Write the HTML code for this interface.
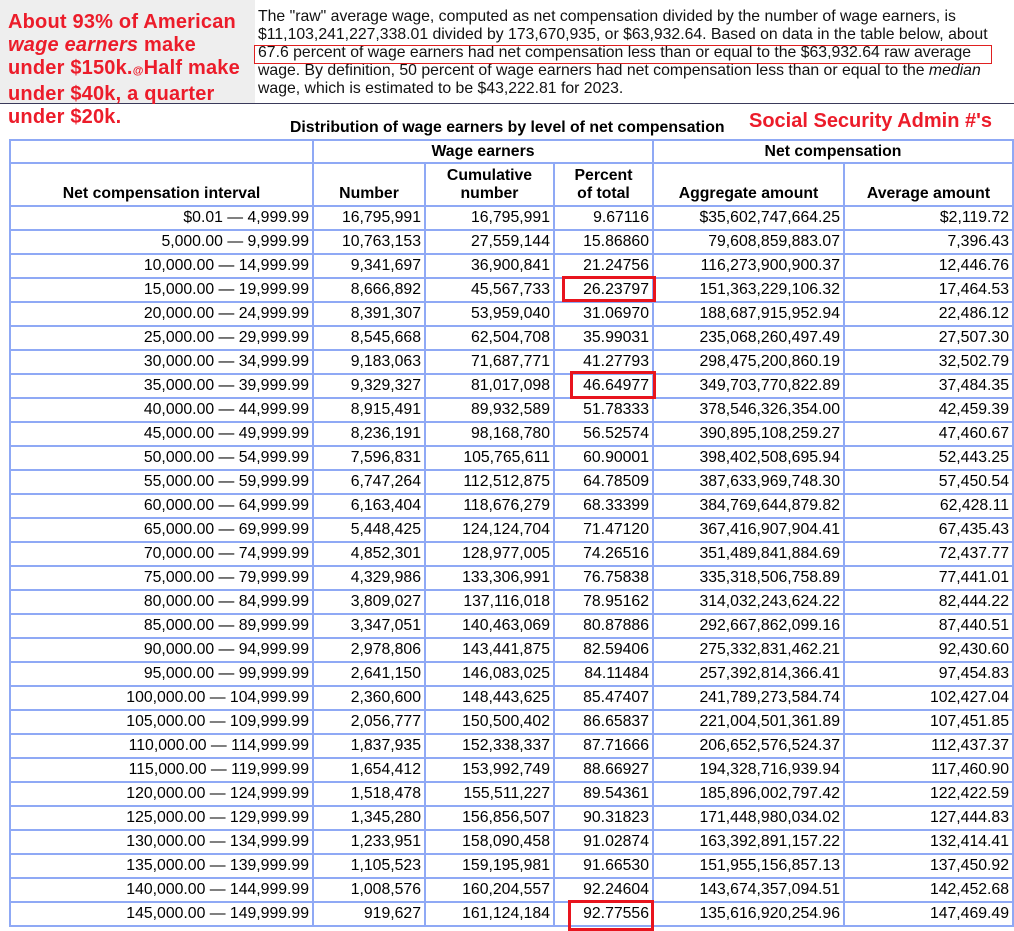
<!DOCTYPE html>
<html><head><meta charset="utf-8"><style>
body{margin:0;width:1014px;height:925px;overflow:hidden;background:#fff;font-family:"Liberation Sans",Arial,sans-serif;position:relative}
.gray{position:absolute;left:0;top:0;width:255px;height:103px;background:#eeeeee}
.hr{position:absolute;left:0;top:103px;width:1014px;height:1px;background:#3a3a5a}
.red{position:absolute;left:8px;top:11px;color:#ec1c2a;font-weight:bold;font-size:20px;line-height:23px;letter-spacing:0.2px;z-index:3}
.para{position:absolute;left:258px;top:8px;width:760px;font-size:15.8px;line-height:18px;color:#111;white-space:nowrap}
.box{position:absolute;border:1.5px solid #e02020}
.title{position:absolute;left:290px;top:119px;font-weight:bold;font-size:15.8px;color:#000}
.ssa{position:absolute;left:749px;top:110px;color:#ec1c2a;font-weight:bold;font-size:20px}
table{position:absolute;left:9px;top:139px;border-collapse:collapse;font-size:15.8px;color:#000}
td,th{border:2px solid #8fa9f5;padding:0 3px;height:22px;line-height:22px;text-align:right;white-space:nowrap}
th{text-align:center;font-weight:bold;line-height:18px;height:21px}
tr.h2 th{height:39px;vertical-align:bottom;padding-bottom:2px}
.rb{position:absolute;border:3px solid #e8141e}
</style></head><body>
<div class="gray"></div><div class="hr"></div>
<div class="red">About 93% of American<br><i>wage earners</i> make<br>under $150k.<span style="font-size:11px">@</span>Half make<br>under $40k, a quarter<br>under $20k.</div>
<div class="para">The "raw" average wage, computed as net compensation divided by the number of wage earners, is<br>$11,103,241,227,338.01 divided by 173,670,935, or $63,932.64. Based on data in the table below, about<br>67.6 percent of wage earners had net compensation less than or equal to the $63,932.64 raw average<br>wage. By definition, 50 percent of wage earners had net compensation less than or equal to the <i>median</i><br>wage, which is estimated to be $43,222.81 for 2023.</div>
<div class="box" style="left:254px;top:45px;width:736px;height:17px"></div>
<div class="title">Distribution of wage earners by level of net compensation</div>
<div class="ssa">Social Security Admin #'s</div>
<table>
<colgroup><col style="width:303px"><col style="width:112px"><col style="width:129px"><col style="width:99px"><col style="width:191px"><col style="width:169px"></colgroup>
<tr><th></th><th colspan="3">Wage earners</th><th colspan="2">Net compensation</th></tr>
<tr class="h2"><th>Net compensation interval</th><th>Number</th><th>Cumulative<br>number</th><th>Percent<br>of total</th><th>Aggregate amount</th><th>Average amount</th></tr>
<tr><td>$0.01 — 4,999.99</td><td>16,795,991</td><td>16,795,991</td><td>9.67116</td><td>$35,602,747,664.25</td><td>$2,119.72</td></tr>
<tr><td>5,000.00 — 9,999.99</td><td>10,763,153</td><td>27,559,144</td><td>15.86860</td><td>79,608,859,883.07</td><td>7,396.43</td></tr>
<tr><td>10,000.00 — 14,999.99</td><td>9,341,697</td><td>36,900,841</td><td>21.24756</td><td>116,273,900,900.37</td><td>12,446.76</td></tr>
<tr><td>15,000.00 — 19,999.99</td><td>8,666,892</td><td>45,567,733</td><td>26.23797</td><td>151,363,229,106.32</td><td>17,464.53</td></tr>
<tr><td>20,000.00 — 24,999.99</td><td>8,391,307</td><td>53,959,040</td><td>31.06970</td><td>188,687,915,952.94</td><td>22,486.12</td></tr>
<tr><td>25,000.00 — 29,999.99</td><td>8,545,668</td><td>62,504,708</td><td>35.99031</td><td>235,068,260,497.49</td><td>27,507.30</td></tr>
<tr><td>30,000.00 — 34,999.99</td><td>9,183,063</td><td>71,687,771</td><td>41.27793</td><td>298,475,200,860.19</td><td>32,502.79</td></tr>
<tr><td>35,000.00 — 39,999.99</td><td>9,329,327</td><td>81,017,098</td><td>46.64977</td><td>349,703,770,822.89</td><td>37,484.35</td></tr>
<tr><td>40,000.00 — 44,999.99</td><td>8,915,491</td><td>89,932,589</td><td>51.78333</td><td>378,546,326,354.00</td><td>42,459.39</td></tr>
<tr><td>45,000.00 — 49,999.99</td><td>8,236,191</td><td>98,168,780</td><td>56.52574</td><td>390,895,108,259.27</td><td>47,460.67</td></tr>
<tr><td>50,000.00 — 54,999.99</td><td>7,596,831</td><td>105,765,611</td><td>60.90001</td><td>398,402,508,695.94</td><td>52,443.25</td></tr>
<tr><td>55,000.00 — 59,999.99</td><td>6,747,264</td><td>112,512,875</td><td>64.78509</td><td>387,633,969,748.30</td><td>57,450.54</td></tr>
<tr><td>60,000.00 — 64,999.99</td><td>6,163,404</td><td>118,676,279</td><td>68.33399</td><td>384,769,644,879.82</td><td>62,428.11</td></tr>
<tr><td>65,000.00 — 69,999.99</td><td>5,448,425</td><td>124,124,704</td><td>71.47120</td><td>367,416,907,904.41</td><td>67,435.43</td></tr>
<tr><td>70,000.00 — 74,999.99</td><td>4,852,301</td><td>128,977,005</td><td>74.26516</td><td>351,489,841,884.69</td><td>72,437.77</td></tr>
<tr><td>75,000.00 — 79,999.99</td><td>4,329,986</td><td>133,306,991</td><td>76.75838</td><td>335,318,506,758.89</td><td>77,441.01</td></tr>
<tr><td>80,000.00 — 84,999.99</td><td>3,809,027</td><td>137,116,018</td><td>78.95162</td><td>314,032,243,624.22</td><td>82,444.22</td></tr>
<tr><td>85,000.00 — 89,999.99</td><td>3,347,051</td><td>140,463,069</td><td>80.87886</td><td>292,667,862,099.16</td><td>87,440.51</td></tr>
<tr><td>90,000.00 — 94,999.99</td><td>2,978,806</td><td>143,441,875</td><td>82.59406</td><td>275,332,831,462.21</td><td>92,430.60</td></tr>
<tr><td>95,000.00 — 99,999.99</td><td>2,641,150</td><td>146,083,025</td><td>84.11484</td><td>257,392,814,366.41</td><td>97,454.83</td></tr>
<tr><td>100,000.00 — 104,999.99</td><td>2,360,600</td><td>148,443,625</td><td>85.47407</td><td>241,789,273,584.74</td><td>102,427.04</td></tr>
<tr><td>105,000.00 — 109,999.99</td><td>2,056,777</td><td>150,500,402</td><td>86.65837</td><td>221,004,501,361.89</td><td>107,451.85</td></tr>
<tr><td>110,000.00 — 114,999.99</td><td>1,837,935</td><td>152,338,337</td><td>87.71666</td><td>206,652,576,524.37</td><td>112,437.37</td></tr>
<tr><td>115,000.00 — 119,999.99</td><td>1,654,412</td><td>153,992,749</td><td>88.66927</td><td>194,328,716,939.94</td><td>117,460.90</td></tr>
<tr><td>120,000.00 — 124,999.99</td><td>1,518,478</td><td>155,511,227</td><td>89.54361</td><td>185,896,002,797.42</td><td>122,422.59</td></tr>
<tr><td>125,000.00 — 129,999.99</td><td>1,345,280</td><td>156,856,507</td><td>90.31823</td><td>171,448,980,034.02</td><td>127,444.83</td></tr>
<tr><td>130,000.00 — 134,999.99</td><td>1,233,951</td><td>158,090,458</td><td>91.02874</td><td>163,392,891,157.22</td><td>132,414.41</td></tr>
<tr><td>135,000.00 — 139,999.99</td><td>1,105,523</td><td>159,195,981</td><td>91.66530</td><td>151,955,156,857.13</td><td>137,450.92</td></tr>
<tr><td>140,000.00 — 144,999.99</td><td>1,008,576</td><td>160,204,557</td><td>92.24604</td><td>143,674,357,094.51</td><td>142,452.68</td></tr>
<tr><td>145,000.00 — 149,999.99</td><td>919,627</td><td>161,124,184</td><td>92.77556</td><td>135,616,920,254.96</td><td>147,469.49</td></tr>
</table>
<div class="rb" style="left:562px;top:276px;width:88px;height:20px"></div>
<div class="rb" style="left:570px;top:371px;width:80px;height:22px"></div>
<div class="rb" style="left:568px;top:900px;width:80px;height:25px"></div>
</body></html>
